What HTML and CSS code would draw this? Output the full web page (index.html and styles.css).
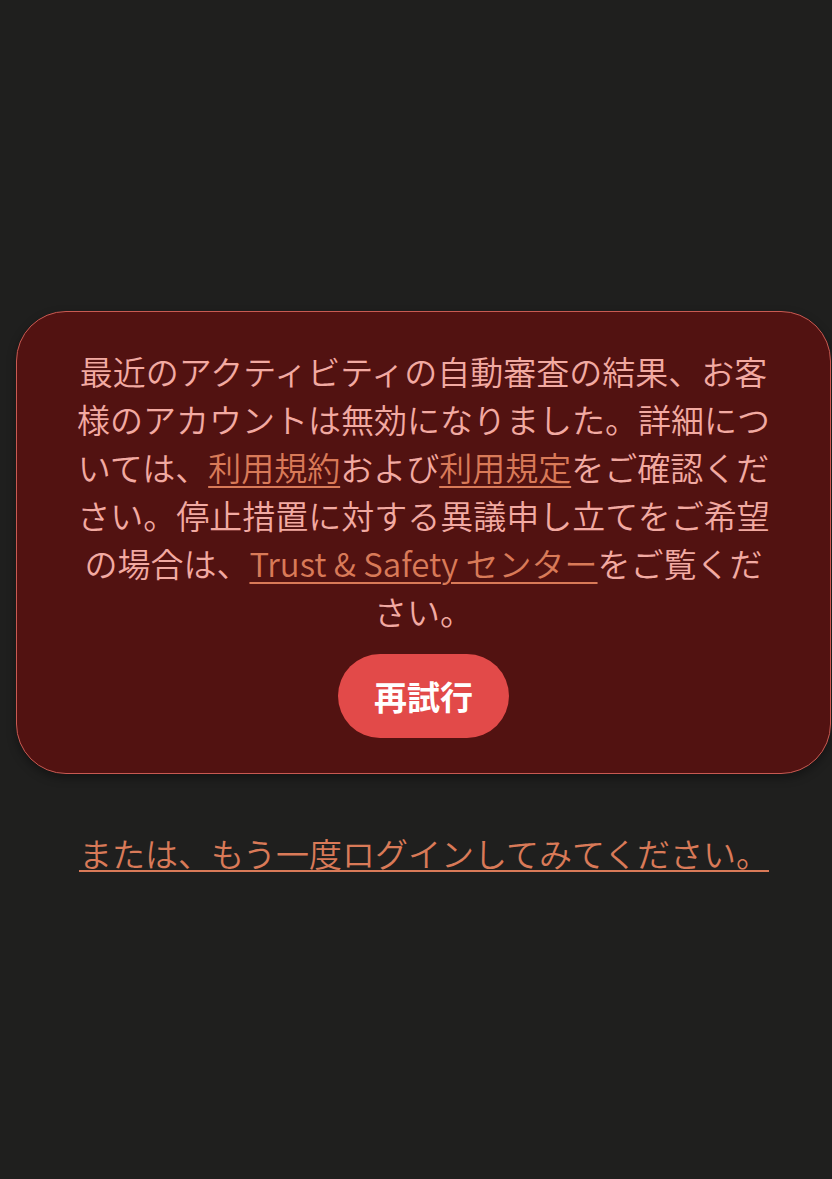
FILE: index.html
```html
<!DOCTYPE html>
<html lang="ja">
<head>
<meta charset="utf-8">
<title>エラー</title>
<link rel="stylesheet" href="styles.css">
</head>
<body>
<main class="page">
  <section class="card">
    <p class="message">最近のアクティビティの自動審査の結果、お客様のアカウントは無効になりました。詳細については、<a class="link" href="#">利用規約</a>および<a class="link" href="#">利用規定</a>をご確認ください。停止措置に対する異議申し立てをご希望の場合は、<a class="link" href="#">Trust &amp; Safety センター</a>をご覧ください。</p>
    <button class="retry" type="button">再試行</button>
  </section>
  <a class="login" href="#">または、もう一度ログインしてみてください。</a>
</main>
</body>
</html>
```

FILE: styles.css
```css
html, body {
  margin: 0;
  padding: 0;
  background: #1f1f1e;
}
body {
  font-family: "Noto Sans CJK JP", "Noto Sans", sans-serif;
  min-height: 1179px;
}
.page {
  padding: 311px 0 0 16px;
  display: flex;
  flex-direction: column;
  align-items: flex-start;
}
.card {
  box-sizing: border-box;
  width: 815px;
  background: #521211;
  border: 1px solid #c95a52;
  border-radius: 50px;
  padding: 35px 58px 35px;
  display: flex;
  flex-direction: column;
  align-items: center;
  box-shadow: 0 4px 10px rgba(0, 0, 0, 0.35);
}
.message {
  margin: 0;
  font-size: 33px;
  font-weight: 350;
  line-height: 48px;
  color: #f2aaa2;
  text-align: center;
  width: 696px;
}
.link {
  color: #d97a58;
  text-decoration: underline;
  text-decoration-thickness: 2px;
  text-underline-offset: 5px;
}
.retry {
  margin-top: 19px;
  height: 84px;
  padding: 0 36px;
  border: none;
  border-radius: 42px;
  background: #e24a49;
  color: #ffffff;
  font-family: "Noto Sans CJK JP", sans-serif;
  font-weight: 700;
  font-size: 33px;
  line-height: 48px;
  cursor: pointer;
}
.login {
  align-self: center;
  margin: 55px 0 0 0;
  font-size: 33px;
  font-weight: 350;
  line-height: 48px;
  color: #d97a58;
  text-decoration: underline;
  text-decoration-thickness: 2px;
  text-underline-offset: 3px;
}
```
